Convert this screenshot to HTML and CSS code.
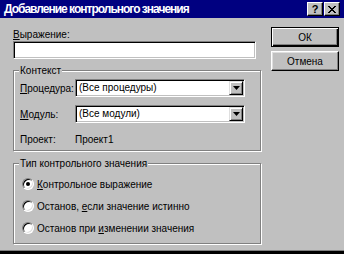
FILE: index.html
```html
<!DOCTYPE html>
<html lang="ru">
<head>
<meta charset="utf-8">
<link rel="stylesheet" href="styles.css">
</head>
<body>
<div class="window">
  <div class="titlebar">
    <span class="title">Добавление контрольного значения</span>
    <div class="caption-btns">
      <span class="cap-btn help">?</span>
      <span class="cap-btn close"><svg width="8" height="7" viewBox="0 0 8 7"><path d="M0 0h2v1h-2zM6 0h2v1h-2zM1 1h2v1h-2zM5 1h2v1h-2zM2 2h4v1h-4zM3 3h2v1h-2zM2 4h4v1h-4zM1 5h2v1h-2zM5 5h2v1h-2zM0 6h2v1h-2zM6 6h2v1h-2z" fill="#000"/></svg></span>
    </div>
  </div>
  <div class="client">
    <div class="main">
      <div class="field-label"><u>В</u>ыражение:</div>
      <div class="textbox"></div>
      <div class="group context">
        <span class="legend">Контекст</span>
        <div class="row">
          <span class="row-label"><u>П</u>роцедура:</span>
          <div class="combo"><span class="combo-text">(Все процедуры)</span><span class="combo-btn"><svg width="7" height="4" viewBox="0 0 7 4"><path d="M0 0h7l-3.5 4z" fill="#000"/></svg></span></div>
        </div>
        <div class="row">
          <span class="row-label"><u>М</u>одуль:</span>
          <div class="combo"><span class="combo-text">(Все модули)</span><span class="combo-btn"><svg width="7" height="4" viewBox="0 0 7 4"><path d="M0 0h7l-3.5 4z" fill="#000"/></svg></span></div>
        </div>
        <div class="row info">
          <span class="row-label">Проект:</span>
          <span>Проект1</span>
        </div>
      </div>
      <div class="group type">
        <span class="legend">Тип контрольного значения</span>
        <div class="radio-row"><span class="radio checked"></span><span><u>К</u>онтрольное выражение</span></div>
        <div class="radio-row"><span class="radio"></span><span>Останов, <u>е</u>сли значение истинно</span></div>
        <div class="radio-row"><span class="radio"></span><span>Останов при <u>и</u>зменении значения</span></div>
      </div>
    </div>
    <div class="buttons">
      <button class="btn default">ОК</button>
      <button class="btn">Отмена</button>
    </div>
  </div>
</div>
</body>
</html>
```

FILE: styles.css
```css
* { box-sizing: border-box; }
html, body { margin: 0; padding: 0; }
body {
  width: 344px;
  height: 254px;
  overflow: hidden;
  background: #c0c0c0;
  font-family: "Liberation Sans", Arial, sans-serif;
  font-size: 10px;
  color: #000;
}
.window {
  height: 254px;
  background: #c0c0c0;
  box-shadow: inset 0 -3px #000, inset 0 -4px #808080;
}
.titlebar {
  height: 18px;
  background: #000080;
  display: flex;
  align-items: flex-start;
  padding: 0 4px 0 4px;
}
.title {
  color: #fff;
  font-weight: bold;
  font-size: 12px;
  line-height: 18px;
  letter-spacing: -1px;
}
.caption-btns {
  margin-left: auto;
  margin-top: 2px;
  display: flex;
  gap: 1px;
}
.cap-btn {
  width: 16px;
  height: 14px;
  background: #c0c0c0;
  border: 1px solid;
  border-color: #fff #000 #000 #fff;
  box-shadow: inset -1px -1px #808080;
  display: flex;
  align-items: center;
  justify-content: center;
  font-weight: bold;
  font-size: 11px;
  line-height: 12px;
}
.client {
  display: flex;
}
.main {
  width: 261px;
  padding: 10px 0 0 13px;
}
.field-label {
  line-height: 13px;
  height: 13px;
}
.textbox {
  width: 243px;
  height: 18px;
  background: #fff;
  border: 1px solid;
  border-color: #808080 #fff #fff #808080;
  box-shadow: inset 1px 1px #000, inset -1px -1px #c0c0c0;
}
.group {
  position: relative;
  width: 248px;
  border: 1px solid #808080;
  box-shadow: inset 1px 1px #fff, 1px 1px #fff;
}
.legend {
  position: absolute;
  top: -7px;
  left: 5px;
  padding: 0 1px;
  background: #c0c0c0;
  line-height: 13px;
}
.context {
  margin-top: 11px;
  padding: 8px 0 4px 6px;
}
.row {
  display: flex;
  align-items: center;
  height: 18px;
  margin-bottom: 8px;
}
.row.info {
  height: 13px;
  margin: 10px 0 0 0;
}
.row-label {
  width: 55px;
  flex: none;
}
.combo {
  width: 170px;
  height: 18px;
  background: #fff;
  border: 1px solid;
  border-color: #808080 #fff #fff #808080;
  box-shadow: inset 1px 1px #000, inset -1px -1px #c0c0c0;
  display: flex;
  align-items: center;
  padding: 1px;
}
.combo-text {
  flex: 1;
  padding-left: 2px;
  line-height: 14px;
}
.combo-btn {
  width: 14px;
  height: 14px;
  background: #c0c0c0;
  border: 1px solid;
  border-color: #dfdfdf #000 #000 #dfdfdf;
  box-shadow: inset 1px 1px #fff, inset -1px -1px #808080;
  display: flex;
  align-items: center;
  justify-content: center;
}
.type {
  margin-top: 12px;
  padding: 9px 0 4px 8px;
}
.radio-row {
  display: flex;
  align-items: center;
  height: 22px;
  gap: 3px;
}
.radio {
  width: 12px;
  height: 12px;
  border-radius: 50%;
  background: #fff;
  border: 1px solid;
  border-color: #808080 #fff #fff #808080;
  box-shadow: inset 1px 1px #000, inset -1px -1px #dfdfdf;
  position: relative;
  flex: none;
}
.radio.checked::after {
  content: "";
  position: absolute;
  left: 3px;
  top: 3px;
  width: 4px;
  height: 4px;
  border-radius: 50%;
  background: #000;
}
.buttons {
  padding: 9px 0 0 10px;
  display: flex;
  flex-direction: column;
  gap: 4px;
}
.btn {
  width: 68px;
  height: 20px;
  background: #c0c0c0;
  font-family: "Liberation Sans", Arial, sans-serif;
  font-size: 10px;
  color: #000;
  padding: 0;
  border: 1px solid;
  border-color: #fff #000 #000 #fff;
  box-shadow: inset -1px -1px #808080, inset 1px 1px #dfdfdf;
}
.btn.default {
  border: 1px solid #000;
  box-shadow: inset 1px 1px #fff, inset -1px -1px #000, inset -2px -2px #808080;
}
```
